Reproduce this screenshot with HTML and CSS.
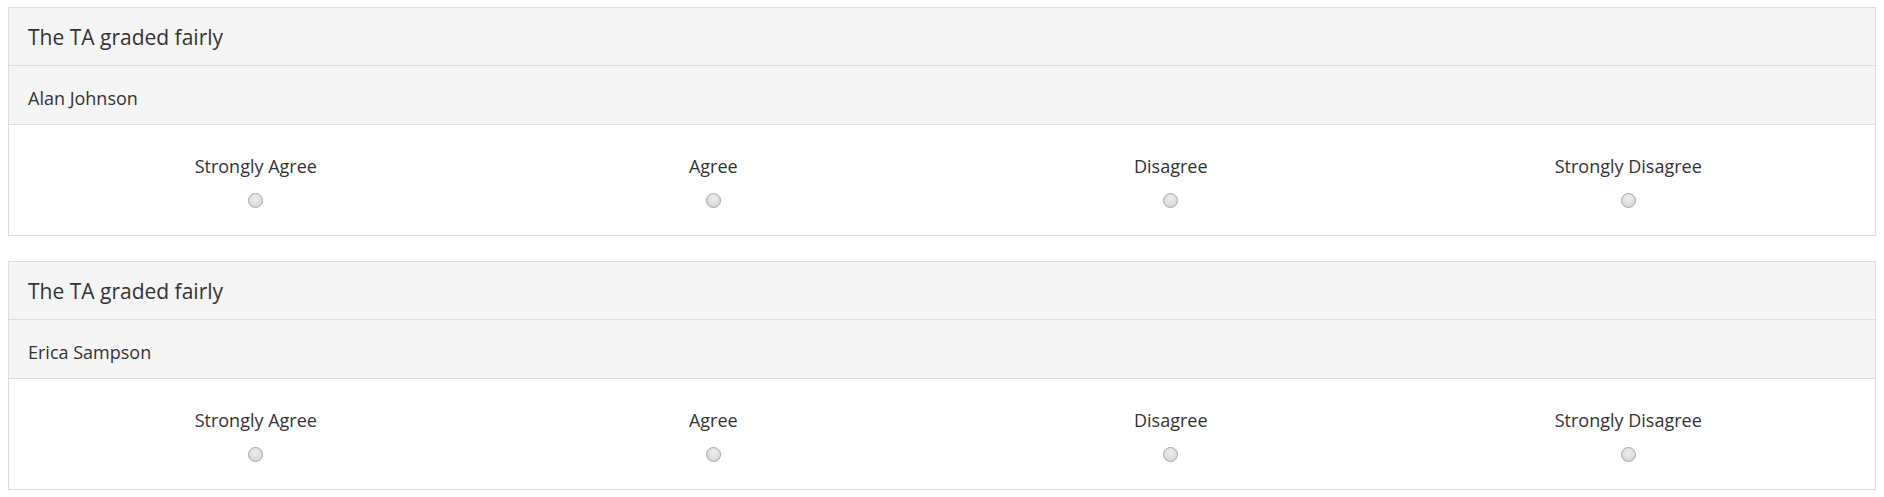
FILE: index.html
```html
<!DOCTYPE html>
<html>
<head>
<meta charset="utf-8">
<link rel="stylesheet" href="styles.css">
</head>
<body>
<div class="panel">
  <div class="panel-heading">The TA graded fairly</div>
  <div class="panel-sub">Alan Johnson</div>
  <div class="panel-body">
    <label class="opt"><span>Strongly Agree</span><input type="radio" name="q1"></label>
    <label class="opt"><span>Agree</span><input type="radio" name="q1"></label>
    <label class="opt"><span>Disagree</span><input type="radio" name="q1"></label>
    <label class="opt"><span>Strongly Disagree</span><input type="radio" name="q1"></label>
  </div>
</div>
<div class="panel">
  <div class="panel-heading">The TA graded fairly</div>
  <div class="panel-sub">Erica Sampson</div>
  <div class="panel-body">
    <label class="opt"><span>Strongly Agree</span><input type="radio" name="q2"></label>
    <label class="opt"><span>Agree</span><input type="radio" name="q2"></label>
    <label class="opt"><span>Disagree</span><input type="radio" name="q2"></label>
    <label class="opt"><span>Strongly Disagree</span><input type="radio" name="q2"></label>
  </div>
</div>
</body>
</html>
```
FILE: styles.css
```css
html, body {
  margin: 0;
  padding: 0;
  background: #fff;
}
body {
  padding: 7px 8px 0 8px;
  font-family: "Open Sans", "Noto Sans", sans-serif;
  color: #333;
}
.panel {
  border: 1px solid #ddd;
  margin-bottom: 25px;
  background: #fff;
}
.panel-heading {
  background: #f5f5f5;
  border-bottom: 1px solid #ddd;
  height: 58px;
  box-sizing: border-box;
  padding: 0 19px;
  display: flex;
  align-items: center;
  font-size: 21px;
}
.panel-sub {
  background: #f5f5f5;
  border-bottom: 1px solid #ddd;
  height: 59px;
  box-sizing: border-box;
  padding: 5px 19px 0 19px;
  display: flex;
  align-items: center;
  font-size: 18px;
}
.panel-body {
  height: 110px;
  box-sizing: border-box;
  padding: 28px 18px 0 18px;
  display: grid;
  grid-template-columns: repeat(4, 1fr);
}
.opt {
  display: flex;
  flex-direction: column;
  align-items: center;
  font-size: 18px;
}
.opt span {
  line-height: 26px;
}
.opt input {
  appearance: none;
  -webkit-appearance: none;
  width: 15px;
  height: 15px;
  margin: 14px 0 0 0;
  border-radius: 50%;
  border: 1px solid #a6a6a6;
  background: radial-gradient(circle at 50% 35%, #ededed 0%, #dddddd 60%, #cecece 100%);
  box-sizing: border-box;
}
```
